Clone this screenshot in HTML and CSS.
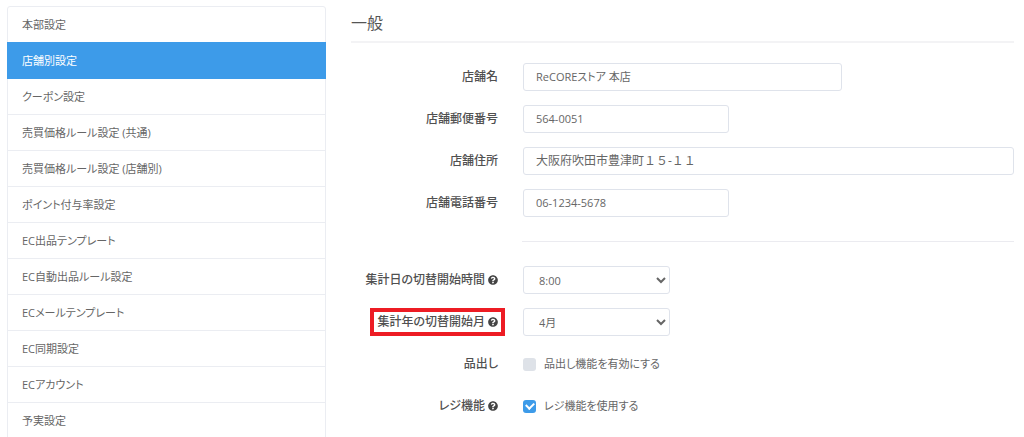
FILE: index.html
```html
<!DOCTYPE html>
<html lang="ja">
<head>
  <meta charset="UTF-8">
  <meta name="viewport" content="width=device-width, initial-scale=1.0">
  <title>店舗別設定</title>
  <link rel="stylesheet" href="styles.css">
</head>
<body>
  <!-- Shared icon -->
  <svg class="icon-defs" aria-hidden="true">
    <symbol id="icon-help" viewBox="0 0 512 512">
      <path d="M504 256c0 137-111 248-248 248S8 393 8 256 119 8 256 8s248 111 248 248zM262.700 90c-54.500 0-89.300 23-116.500 63.800-3.500 5.300-2.400 12.400 2.700 16.300l34.700 26.300c5.200 3.900 12.600 3 16.700-2.100 17.900-22.700 30.100-35.800 57.300-35.800 20.400 0 45.700 13.100 45.700 33 0 15-12.400 22.700-32.500 34C247.100 238.500 216 254.900 216 296v4c0 6.600 5.400 12 12 12h56c6.600 0 12-5.400 12-12v-1.300c0-28.500 83.200-29.600 83.200-106.700 0-58-60.200-102-116.500-102zM256 338c-25.400 0-46 20.600-46 46s20.600 46 46 46 46-20.600 46-46-20.600-46-46-46z"/>
    </symbol>
  </svg>

  <div class="page">
    <!-- Side Menu -->
    <nav class="side-menu">
      <a href="#">本部設定</a>
      <a href="#" class="active">店舗別設定</a>
      <a href="#">クーポン設定</a>
      <a href="#">売買価格ルール設定 (共通)</a>
      <a href="#">売買価格ルール設定 (店舗別)</a>
      <a href="#">ポイント付与率設定</a>
      <a href="#">EC出品テンプレート</a>
      <a href="#">EC自動出品ルール設定</a>
      <a href="#">ECメールテンプレート</a>
      <a href="#">EC同期設定</a>
      <a href="#">ECアカウント</a>
      <a href="#">予実設定</a>
    </nav>

    <!-- Settings Form -->
    <main class="content">
      <h2>一般</h2>
      <form class="settings-form">
        <div class="form-row">
          <label for="shop-name">店舗名</label>
          <input type="text" class="form-control medium" id="shop-name" value="ReCOREストア 本店">
        </div>
        <div class="form-row">
          <label for="shop-zip">店舗郵便番号</label>
          <input type="text" class="form-control small" id="shop-zip" value="564-0051">
        </div>
        <div class="form-row">
          <label for="shop-address">店舗住所</label>
          <input type="text" class="form-control address" id="shop-address" value="大阪府吹田市豊津町１５-１１">
        </div>
        <div class="form-row">
          <label for="shop-tel">店舗電話番号</label>
          <input type="text" class="form-control small" id="shop-tel" value="06-1234-5678">
        </div>

        <hr>

        <div class="form-row">
          <label for="start-hour"><span class="label-text">集計日の切替開始時間 <svg class="icon-help"><use href="#icon-help"/></svg></span></label>
          <select class="form-control select" id="start-hour">
            <option>8:00</option>
          </select>
        </div>
        <div class="form-row">
          <label for="start-month"><span class="label-text highlight">集計年の切替開始月 <svg class="icon-help"><use href="#icon-help"/></svg></span></label>
          <select class="form-control select" id="start-month">
            <option>4月</option>
          </select>
        </div>
        <div class="form-row">
          <span class="row-title">品出し</span>
          <label class="check" for="use-stocking"><input type="checkbox" id="use-stocking">品出し機能を有効にする</label>
        </div>
        <div class="form-row">
          <span class="row-title"><span class="label-text">レジ機能 <svg class="icon-help"><use href="#icon-help"/></svg></span></span>
          <label class="check" for="use-register"><input type="checkbox" id="use-register" checked>レジ機能を使用する</label>
        </div>
      </form>
    </main>
  </div>
</body>
</html>
```
FILE: styles.css
```css
* {
  margin: 0;
  padding: 0;
  box-sizing: border-box;
}

body {
  background: #fff;
  color: #666;
  font-family: "Open Sans", "Noto Sans CJK JP", sans-serif;
  font-size: 11px;
  line-height: 20px;
  font-feature-settings: "palt";
}

.icon-defs {
  display: none;
}

.page {
  display: grid;
  grid-template-columns: repeat(3, 1fr);
  align-items: start;
  gap: 25px;
  height: 100vh;
  padding: 6px 10px 0 7px;
  overflow: hidden;
}

/* Side Menu */
.side-menu {
  display: flex;
  flex-direction: column;
  border: 1px solid #ebedf2;
  border-radius: 3px;
}

.side-menu a {
  height: 36px;
  padding: 8px 14px;
  border-bottom: 1px solid #ebedf2;
  color: #666;
  line-height: 20px;
  text-decoration: none;
}

.side-menu a.active {
  margin: -1px -1px 0;
  padding: 9px 15px 8px;
  height: 37px;
  background: #3d9be9;
  border-color: #3d9be9;
  color: #fff;
}

/* Content */
.content {
  grid-column: span 2;
}

.content h2 {
  padding: 5px 0 6px;
  border-bottom: 2px solid #f3f3f5;
  color: #555;
  font-size: 16px;
  font-weight: 400;
  line-height: 24px;
}

.settings-form {
  display: flex;
  flex-direction: column;
  gap: 14px;
  padding-top: 20px;
}

.form-row {
  display: grid;
  grid-template-columns: repeat(12, 1fr);
  column-gap: 25px;
  line-height: 28px;
}

.form-row > :first-child {
  grid-column: span 3;
  color: #505050;
  font-size: 12px;
  font-weight: 500;
  text-align: right;
  white-space: nowrap;
}

.form-row > :last-child {
  grid-column: span 9;
}

.label-text {
  display: inline-flex;
  align-items: center;
  gap: 3px;
  line-height: 14px;
}

.icon-help {
  width: 10px;
  height: 10px;
  fill: #444;
}

.highlight {
  outline: 4px solid #ed1c24;
  outline-offset: 3px;
}

.form-control {
  width: 100%;
  height: 28px;
  padding: 0 12px;
  background: #fff;
  border: 1px solid #dfe3eb;
  border-radius: 3px;
  color: #666;
  font: inherit;
  font-feature-settings: "palt";
}

.address {
  font-size: 12px;
  font-feature-settings: normal;
}

.medium {
  width: 65%;
}

.small {
  width: 42%;
}

.select {
  width: 30%;
  padding: 0 0 0 11px;
}

.settings-form hr {
  margin: 10px 0 10px 171px;
  border: 0;
  border-top: 1px solid #ebebf0;
}

/* Checkboxes */
.check {
  display: flex;
  align-items: center;
  gap: 8px;
}

.check input {
  display: grid;
  place-items: center;
  width: 13px;
  height: 13px;
  appearance: none;
  background: #dee2e8;
  border-radius: 3px;
}

.check input:checked {
  background: #3d9be9;
}

.check input:checked::after {
  content: "";
  width: 6px;
  height: 4px;
  margin-bottom: 2px;
  border: solid #fff;
  border-width: 0 0 2px 2px;
  transform: rotate(-45deg);
}
```
